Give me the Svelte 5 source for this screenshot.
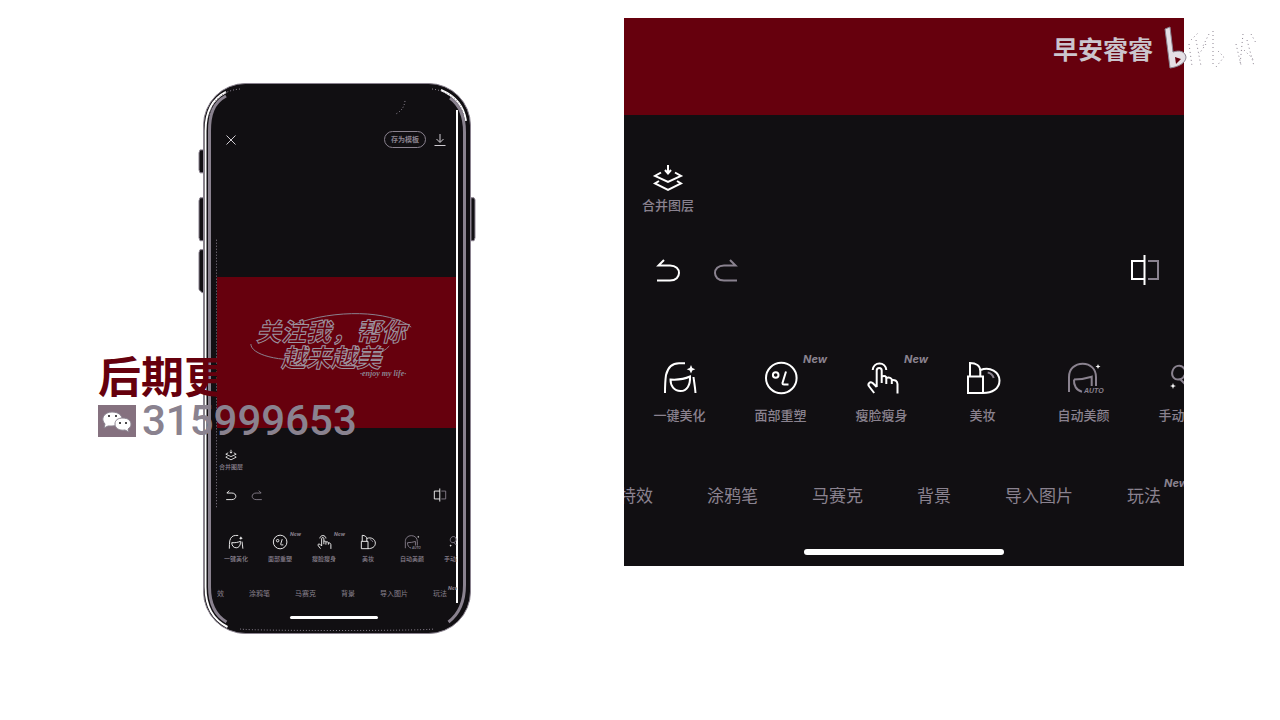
<script>
  const tools = [
    { icon: 'beauty', label: '一键美化' },
    { icon: 'face', label: '面部重塑', fresh: true },
    { icon: 'slim', label: '瘦脸瘦身', fresh: true },
    { icon: 'makeup', label: '美妆' },
    { icon: 'auto', label: '自动美颜', dim: true },
    { icon: 'manual', label: '手动美颜', dim: true }
  ];
  const tabs = [
    { label: '特效' },
    { label: '涂鸦笔' },
    { label: '马赛克' },
    { label: '背景' },
    { label: '导入图片' },
    { label: '玩法', fresh: true }
  ];
</script>

{#snippet toolIcon(name)}
  <svg viewBox="0 0 36 36" aria-hidden="true">
    {#if name === 'beauty'}
      <path d="M3 33c0-7 .3-13 1-18C6 7 11 3.3 17 3.3h6M31.5 17c.6 5 1.600 10 2 16M8.500 19.500c7 .5 14-.5 19.500-3C28.500 25 25 31 18.500 31S8.500 26 8.500 19.500z" />
      <path class="solid" d="M29 5l1.300 3 3 1.300-3 1.300L29 13.600l-1.300-3-3-1.300 3-1.300z" />
    {:else if name === 'face'}
      <circle cx="18.300" cy="18" r="15.300" />
      <circle cx="12.700" cy="15" r="2.800" />
      <path d="M23 11.500l-3.500 11.500c0 1 .5 1.500 1.500 1.500h4.500" />
    {:else if name === 'slim'}
      <path d="M8.700 10C9 6 12 3.500 15.500 3.500S22 6 22.300 10M12.700 27V10.500c0-3.500 5-3.500 5 0V23M17.700 16.500c3-1.500 4.600 0 4.600 2V24M22.300 18c3-1 5.500 0 5.500 2v4M27.800 20c3-.5 5.500 1 5.700 4v9.500M12.700 27l-4-4c-3-2-5.500 1-3.500 3.500l5 6.500" />
    {:else if name === 'makeup'}
      <path d="M3 16.500h15V33H3zM5 16.500V3c6 0 10.300 3 10.300 8v5.500M15.500 10C25 6 34.500 12 34.500 20.500S27 33 18 33" />
      <path class="soft" d="M22.700 12.500c3 .5 5 2.500 6 5.500" />
    {:else if name === 'auto'}
      <path d="M3 32V17C3 9 9 3.700 16.700 3.700S30 9 30 17v9M8 19.500c7 0 12-1 17.700-2.800V26M8 19.500c-.5 6 2.500 11 8 12.200" />
      <path class="solid" d="M32 4l.7 1.800 1.800.7-1.800.7L32 9l-.7-1.800-1.800-.7 1.800-.7z" />
      <text x="18" y="33">AUTO</text>
    {:else}
      <path d="M14 19c-7 2-10-3-8.500-8S14 3 17.500 9c2 4 0 8-3.500 10zM13 19l6 6" />
      <path class="solid" d="M6 23l.8 2.200L9 26l-2.200.8L6 29l-.8-2.200L3 26l2.200-.8z" />
    {/if}
  </svg>
{/snippet}

{#snippet controls()}
  <button class="merge">
    <svg viewBox="0 0 30 30" aria-hidden="true">
      <path d="M15 2v8M12 7l3 3.500L18 7M8 9.500L2 13l13 6 13-6-6-3.500M6 18l-4 2.500L15 27l13-6.500-4-2.500" />
    </svg>
    <span>合并图层</span>
  </button>
  <div class="history">
    <button aria-label="撤销">
      <svg viewBox="0 0 32 32" aria-hidden="true"><path d="M12 6L6.500 11.500H18c12 0 12 15 0 15H5" /></svg>
    </button>
    <button class="dim" aria-label="重做">
      <svg viewBox="0 0 32 32" aria-hidden="true"><path d="M20 6l5.500 5.500H14C2 11.500 2 26.500 14 26.500h13" /></svg>
    </button>
    <button class="compare" aria-label="对比">
      <svg viewBox="0 0 32 32" aria-hidden="true">
        <path d="M15.500 7H3v18h12.500M15.500 1v30" /><path class="soft" d="M19 7h10v18H19" />
      </svg>
    </button>
  </div>
  <div class="tools">
    {#each tools as tool}
      <button class:dim={tool.dim}>
        {@render toolIcon(tool.icon)}
        <span>{tool.label}</span>
        {#if tool.fresh}<b>New</b>{/if}
      </button>
    {/each}
  </div>
  <nav>
    {#each tabs as tab}
      <button>{tab.label}{#if tab.fresh}<b>New</b>{/if}</button>
    {/each}
  </nav>
  <div class="home"></div>
{/snippet}

<main>
  <section class="phone">
    <svg class="frame" viewBox="0 0 278 553" preserveAspectRatio="none" aria-hidden="true">
      <g class="keys">
        <path d="M6 67H2l-1 3v17l1 3h4zM6 115H2l-1 3v37l1 3h4zM6 167H2l-1 3v37l3 3h2zM273 115h3l1 2v38l-1 3h-3z" />
      </g>
      <rect class="edge" x="5.500" y=".5" width="267" height="551" rx="42" />
      <path class="shine" d="M28 9C14 16 7.500 28 7.500 48v457c0 20 8 33 22 40M243 7c14 6 23 17 25 31" />
      <path class="bezel" d="M28 13C15 20 11.500 32 11.500 48v457c0 16 5 28 17 35M252 15c11 8 14.500 20 14.500 34v454c0 16-4 28-16 37" />
      <path class="rim" d="M42 6C20 8 12 22 11 36M234 6c16 2 29 11 32 27M42 547c14 2 178 2 194 0" />
      <path class="glass" d="M259 27v494" />
      <path class="glint" d="M207 18c-1 7-4 10-9 13M18.500 157v270" />
    </svg>
    <div class="screen">
      <header>
        <button class="close" aria-label="关闭">
          <svg viewBox="0 0 12 12" aria-hidden="true"><path d="M1.500 1.500l9 9M10.500 1.500l-9 9" /></svg>
        </button>
        <button class="save">存为模板</button>
        <button class="download" aria-label="下载">
          <svg viewBox="0 0 12 12" aria-hidden="true"><path d="M6 0v8M2.500 5L6 8.500 9.500 5M.5 11.500h11" /></svg>
        </button>
      </header>
      <div class="art">
        <svg viewBox="0 0 240 151" aria-hidden="true">
          <path d="M78 47c40-15 95-14 117 3M34 67c0 10 26 19 67 15M173 69c-7 8-22 12-34 15" />
        </svg>
        <p class="first">关注我，帮你</p>
        <p class="second">越来越美</p>
        <p class="life">·enjoy my life·</p>
      </div>
      {@render controls()}
    </div>
    <aside class="contact">
      <p>后期更</p>
      <div>
        <svg viewBox="0 0 38 32" aria-hidden="true">
          <rect width="38" height="32" />
          <path class="bubble" d="M14 7c6 0 10 3 10 7s-4 7-10 7l-4 0-4 2 1-4c-5-5-1-12 7-12z" />
          <path class="bubble near" d="M25 13c5 0 8 3 8 6 0 2-1 4-3 5l1 3-4-2c-6 1-10-2-10-6s3-6 8-6z" />
          <g class="eyes"><circle cx="11" cy="11" r="1" /><circle cx="18" cy="11" r="1" /><circle cx="22" cy="18" r="1" /><circle cx="28" cy="18" r="1" /></g>
        </svg>
        <strong>315999653</strong>
      </div>
    </aside>
  </section>

  <section class="panel">
    <div class="band"></div>
    {@render controls()}
    <div class="mark">
      <span>早安睿睿</span>
      <svg viewBox="0 0 94 44" aria-hidden="true">
        <path class="b" d="M1 3l5-2 3 25c6-2 12-1 13 5 0 6-8 10-16 11z" />
        <path class="hole" d="M11 31l6 2-5 5z" />
        <g class="dots">
          <path d="M25 18l3 22M27 14l8-8M32 14l5 26M42 18l-7 10M49 5v34M45 8l-6 12M54 25l6 6-8 10M79 8l-3 31M72 18l5 21M83 14l7 26M87 8l5 9M80 24l10 10" />
        </g>
      </svg>
    </div>
  </section>
</main>

<style>
  :global(body) {
    margin: 0;
    background: #fff;
  }
  main {
    --ink: #110f12;
    --red: #66000d;
    --grey: #8a828f;
    display: grid;
    grid-template-columns:
      minmax(0, 198fr) minmax(0, 278fr) minmax(0, 148fr)
      minmax(0, 560fr) minmax(0, 96fr);
    align-items: start;
    padding-top: 18px;
    font-family: "Noto Sans CJK SC", sans-serif;
    overflow-x: clip;
  }
  button {
    display: block;
    margin: 0;
    padding: 0;
    border: 0;
    background: none;
    color: var(--grey);
    font: inherit;
    white-space: nowrap;
    cursor: pointer;
  }
  p {
    margin: 0;
    white-space: nowrap;
  }
  svg {
    display: block;
    flex: none;
    overflow: visible;
    fill: none;
    stroke: #fff;
    stroke-width: 2;
  }
  svg .solid {
    fill: #fff;
    stroke: none;
  }
  svg .soft,
  .dim svg {
    stroke: var(--grey);
  }
  svg text {
    fill: var(--grey);
    stroke: none;
    font: italic bold 7px "Liberation Sans", sans-serif;
  }

  .panel {
    --icon: 36px;
    --label: 13px;
    --line: 16px;
    grid-column: 4;
    position: relative;
    background: var(--ink);
    padding-bottom: 11px;
  }
  .band {
    height: 97px;
    background: var(--red);
  }

  .merge {
    display: flex;
    flex-direction: column;
    align-items: center;
    gap: 4px;
    margin: 48px 0 0 18px;
    font-size: var(--label);
    font-weight: 500;
    line-height: var(--line);
  }
  .merge svg {
    width: 30px;
    height: 30px;
  }
  .history {
    display: flex;
    gap: 26px;
    margin-top: 41px;
    padding: 0 23px 0 28px;
  }
  .history svg {
    width: 32px;
    height: 32px;
  }
  .history .compare {
    margin-left: auto;
  }
  .tools {
    display: flex;
    margin-top: 74px;
    padding-left: 5px;
    overflow-x: clip;
  }
  .tools button {
    position: relative;
    flex: 0 0 101px;
    display: flex;
    flex-direction: column;
    align-items: center;
    gap: 11px;
    font-size: var(--label);
    font-weight: 500;
    line-height: var(--line);
  }
  .tools svg {
    width: var(--icon);
    height: var(--icon);
  }
  b {
    position: absolute;
    top: -7px;
    left: 73px;
    font: italic bold 11px/12px Inter, sans-serif;
  }
  nav {
    display: flex;
    gap: 54px;
    margin-top: 61px;
    overflow-x: clip;
  }
  nav button {
    position: relative;
    flex: none;
    font-size: 17px;
    line-height: 22px;
  }
  nav button:first-child {
    margin-left: -5px;
  }
  nav b {
    left: 100%;
    padding-left: 3px;
  }
  .home {
    width: 200px;
    height: 6px;
    margin: 43px auto 0;
    border-radius: 3px;
    background: #fff;
  }

  .mark {
    position: absolute;
    top: 6px;
    right: -74px;
    display: flex;
    align-items: center;
    gap: 11px;
    color: #cbc5cd;
    font-size: 25px;
    font-weight: 700;
    line-height: 48px;
  }
  .mark svg {
    width: 94px;
    height: 44px;
  }
  .mark .b {
    fill: #e4e0e5;
    stroke: var(--grey);
    stroke-width: 1;
  }
  .mark .hole {
    fill: var(--red);
    stroke: none;
  }
  .mark .dots {
    stroke: var(--grey);
    stroke-width: 1;
    stroke-dasharray: 1 3;
  }

  .phone {
    --label: 6px;
    --line: 8px;
    grid-column: 2;
    position: relative;
    margin-top: 65px;
    padding: 48px 19px 16px;
  }
  .frame {
    position: absolute;
    inset: 0;
    width: 100%;
    height: 100%;
  }
  .frame .keys,
  .frame .edge {
    fill: var(--ink);
    stroke: var(--grey);
    stroke-width: 1;
  }
  .frame .bezel {
    stroke: var(--grey);
    stroke-width: 3;
  }
  .frame .rim,
  .frame .glint {
    stroke: var(--grey);
    stroke-width: 1;
    stroke-dasharray: 1 2;
  }
  .screen {
    position: relative;
  }
  header {
    display: flex;
    align-items: center;
    gap: 8px;
    height: 17px;
    padding: 0 11px 0 8px;
  }
  header svg {
    width: 12px;
    height: 12px;
    stroke: #d0ccd2;
    stroke-width: 1;
  }
  .close {
    margin-right: auto;
  }
  .save {
    box-sizing: border-box;
    width: 42px;
    height: 17px;
    border: 1px solid var(--grey);
    border-radius: 9px;
    font-size: 7px;
    font-weight: 700;
    line-height: 15px;
  }
  .art {
    display: flow-root;
    position: relative;
    height: 151px;
    margin: 129px 1px 0 0;
    background: var(--red);
  }
  .art svg {
    position: absolute;
    inset: 0;
    width: 100%;
    height: 100%;
    stroke: var(--grey);
    stroke-width: 1;
  }
  .first,
  .second {
    position: relative;
    font-size: 25px;
    font-style: italic;
    font-weight: 700;
    line-height: 26px;
    color: var(--red);
    -webkit-text-stroke: 1px #9c94a0;
  }
  .first {
    margin: 40px 0 0 39px;
  }
  .second {
    margin-left: 64px;
  }
  .life {
    margin-left: 143px;
    color: var(--grey);
    font: italic bold 8px/10px "Liberation Serif", serif;
  }
  .phone .merge {
    gap: 2px;
    margin: 21px 0 0 2px;
  }
  .phone .merge svg {
    width: 12px;
    height: 12px;
  }
  .phone .history {
    gap: 12px;
    margin-top: 17px;
    padding: 0 10px 0 7px;
  }
  .phone .history svg {
    width: 14px;
    height: 14px;
  }
  .phone .tools {
    margin-top: 32px;
    padding: 0;
  }
  .phone .tools button {
    flex-basis: 44px;
    gap: 5px;
  }
  .phone .tools button:first-child {
    margin-left: -3px;
  }
  .phone .tools svg {
    width: 16px;
    height: 16px;
  }
  .phone b {
    top: -3px;
    left: 32px;
    font-size: 5px;
    line-height: 6px;
  }
  .phone nav {
    gap: 25px;
    margin-top: 25px;
  }
  .phone nav button {
    font-size: 7px;
    line-height: 10px;
  }
  .phone nav button:first-child {
    margin-left: -7px;
  }
  .phone nav b {
    left: 100%;
    padding-left: 1px;
  }
  .phone .home {
    width: 88px;
    height: 3px;
    margin: 18px 79px 0 73px;
  }

  .contact {
    position: absolute;
    top: 268px;
    left: -100px;
    color: var(--red);
    font-size: 43px;
    font-weight: 700;
  }
  .contact p {
    height: 52px;
    line-height: 46px;
  }
  .contact div {
    display: flex;
    align-items: center;
    gap: 6px;
  }
  .contact svg {
    width: 38px;
    height: 32px;
    stroke: none;
  }
  .contact rect {
    fill: #85717f;
  }
  .contact .bubble {
    fill: #fff;
    stroke: var(--grey);
    stroke-width: 1;
  }
  .contact .eyes {
    fill: var(--ink);
  }
  .contact strong {
    color: var(--grey);
    font: 500 42px/36px Roboto, sans-serif;
  }
</style>
